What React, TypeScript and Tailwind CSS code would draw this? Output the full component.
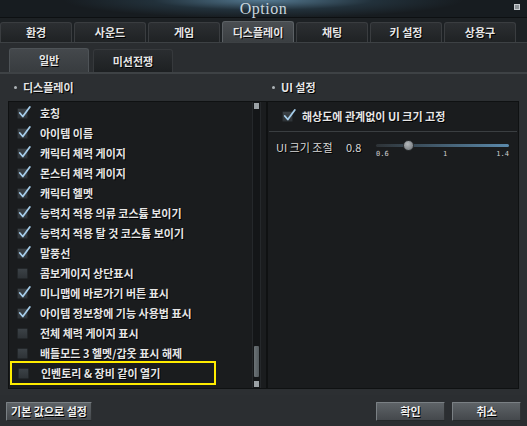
import React from "react";

const items: [string, boolean][] = [
  ["호칭", true],
  ["아이템 이름", true],
  ["캐릭터 체력 게이지", true],
  ["몬스터 체력 게이지", true],
  ["캐릭터 헬멧", true],
  ["능력치 적용 의류 코스튬 보이기", true],
  ["능력치 적용 탈 것 코스튬 보이기", true],
  ["말풍선", true],
  ["콤보게이지 상단표시", false],
  ["미니맵에 바로가기 버튼 표시", true],
  ["아이템 정보창에 기능 사용법 표시", true],
  ["전체 체력 게이지 표시", false],
  ["배틀모드 3 헬멧/갑옷 표시 해제", false],
  ["인벤토리 & 장비 같이 열기", false],
];

const tabs = ["환경", "사운드", "게임", "디스플레이", "채팅", "키 설정", "상용구"];

function Check({ on }: { on: boolean }) {
  return (
    <div className="relative w-[11px] h-[11px] rounded-[1px] bg-[linear-gradient(180deg,#3c4247,#2e3337)] border border-[#23272a] shrink-0">
      {on && (
        <svg className="absolute left-[0px] -top-[3px]" width="13" height="13" viewBox="0 0 13 13">
          <path d="M1.8 7 L4.8 10.5 L11.8 1" stroke="#a6cdea" strokeWidth="1.8" fill="none" strokeLinejoin="round" strokeLinecap="round" />
        </svg>
      )}
    </div>
  );
}

export default function App() {
  const txt = "text-[11px] font-bold text-[#e6e6e6] [text-shadow:1px_1px_0_#000]";
  return (
    <div
      className="w-[527px] h-[426px] bg-[#2b2e31] flex flex-col overflow-hidden"
      style={{ fontFamily: '"Noto Sans CJK KR", "Noto Sans", sans-serif' }}
    >
      {/* Title bar */}
      <div className="relative h-[18px] shrink-0 bg-[radial-gradient(ellipse_200px_18px_at_50%_0%,#557a92,#22313b_55%,#171c20)] border-b border-[#0d1012] flex items-center justify-center">
        <span
          className="text-[16px] leading-none text-[#c9d6de] tracking-[0.5px]"
          style={{ fontFamily: '"Liberation Serif", serif' }}
        >
          Option
        </span>
        <div className="absolute left-[514px] top-[4px] w-[6px] h-[6px] bg-[#8c9296] border border-[#c8ccd0]" />
      </div>

      {/* Tabs */}
      <div className="h-[24px] shrink-0 flex items-end gap-[2px] bg-[#1d2124]">
        {tabs.map((t) => {
          const active = t === "디스플레이";
          return (
            <div
              key={t}
              className={
                "w-[72px] flex items-center justify-center rounded-t-[3px] border border-b-0 " +
                (active
                  ? "h-[21px] bg-[linear-gradient(180deg,#4a4e52,#3a3e41)] border-[#5c6165]"
                  : "h-[20px] bg-[linear-gradient(180deg,#2c2f32,#1f2224)] border-[#3a3d40]")
              }
            >
              <span className={txt}>{t}</span>
            </div>
          );
        })}
      </div>

      {/* Main panel */}
      <div className="h-[353px] shrink-0 bg-[#2c2f32] border-t border-[#3d4144] flex flex-col">
        {/* sub tabs */}
        <div className="h-[29px] shrink-0 flex items-end gap-[4px] pl-[9px] bg-[#2a2d30]">
          <div className="w-[80px] h-[24px] rounded-t-[3px] bg-[linear-gradient(180deg,#44484c,#383c3f)] border border-b-0 border-[#4e5357] flex items-center justify-center">
            <span className={txt}>일반</span>
          </div>
          <div className="w-[80px] h-[23px] rounded-t-[3px] bg-[linear-gradient(180deg,#2a2d30,#1d2022)] border border-b-0 border-[#36393c] flex items-center justify-center">
            <span className={txt}>미션전쟁</span>
          </div>
        </div>
        <div className="h-[2px] shrink-0 bg-[#3e4245]" />

        <div className="flex-1 flex pl-[8px] pr-[8px] pb-[6px] gap-0">
          {/* Left column */}
          <div className="w-[259px] flex flex-col">
            <div className="h-[27px] flex items-center pl-[6px] gap-[6px]">
              <div className="w-[3px] h-[3px] rounded-full bg-[#aeb4b8]" />
              <span className={txt}>디스플레이</span>
            </div>
            <div className="flex-1 bg-[#1a1c1e] border border-[#0f1112] flex">
              <div className="flex-1 flex flex-col pt-[1px]">
                {items.map(([label, on], i) => {
                  const hl = i === items.length - 1;
                  return (
                    <div
                      key={label}
                      className={
                        "h-[20px] flex items-center gap-[12px] " +
                        (hl
                          ? "ml-[1px] w-[206px] h-[24px] -mt-[2px] border-2 border-[#ffec00] pl-[6px]"
                          : "pl-[8px]")
                      }
                    >
                      <Check on={on} />
                      <span className={txt}>{label}</span>
                    </div>
                  );
                })}
              </div>
              {/* scrollbar */}
              <div className="w-[9px] mr-[5px] bg-[#141618] border-x border-[#25282b] flex flex-col items-center py-[1px]">
                <div className="w-[5px] h-[6px] bg-[#9aa0a4]" />
                <div className="flex-1" />
                <div className="w-[5px] h-[31px] rounded-[1px] bg-[linear-gradient(90deg,#6b7276,#535a5e)] mb-[4px]" />
                <div className="w-[5px] h-[6px] bg-[#9aa0a4]" />
              </div>
            </div>
          </div>

          {/* Right column */}
          <div className="flex-1 flex flex-col">
            <div className="h-[27px] flex items-center pl-[5px] gap-[6px]">
              <div className="w-[3px] h-[3px] rounded-full bg-[#aeb4b8]" />
              <span className={txt}>UI 설정</span>
            </div>
            <div className="flex-1 bg-[#1a1c1e] border border-[#0f1112] flex flex-col">
              <div className="h-[30px] flex items-center pl-[13px] gap-[9px] border-b border-[#3a3e41] mx-[1px]">
                <Check on={true} />
                <span className={txt}>해상도에 관계없이 UI 크기 고정</span>
              </div>
              <div className="h-[30px] flex items-center pl-[8px] relative">
                <span className="text-[11px] text-[#d8d8d8] [text-shadow:1px_1px_0_#000] w-[70px]">UI 크기 조절</span>
                <span className="text-[11px] text-[#d8d8d8] [text-shadow:1px_1px_0_#000] w-[30px]">0.8</span>
                <div className="relative w-[133px] h-[30px]">
                  <div className="absolute left-0 right-0 top-[12px] h-[3px] rounded-full bg-[linear-gradient(90deg,#2d3236,#5b8aac)]" />
                  <div className="absolute left-[27px] top-[8px] w-[11px] h-[11px] rounded-full bg-[radial-gradient(circle_at_40%_35%,#b4b8bb,#6b7074)] border border-[#2c2f31]" />
                  <span className="absolute left-0 top-[19px] text-[7px] leading-none text-[#cfcfcf]" style={{ fontFamily: '"DejaVu Sans Mono", monospace' }}>0.6</span>
                  <span className="absolute left-[67px] top-[19px] text-[7px] leading-none text-[#cfcfcf]" style={{ fontFamily: '"DejaVu Sans Mono", monospace' }}>1</span>
                  <span className="absolute right-0 top-[19px] text-[7px] leading-none text-[#cfcfcf]" style={{ fontFamily: '"DejaVu Sans Mono", monospace' }}>1.4</span>
                </div>
              </div>
            </div>
          </div>
        </div>
      </div>

      {/* Bottom bar */}
      <div className="flex-1 flex items-start pt-[7px] px-[6px] bg-[#2b2e31]">
        <Btn w="w-[86px]" label="기본 값으로 설정" />
        <div className="flex-1" />
        <Btn w="w-[69px]" label="확인" />
        <div className="w-[7px]" />
        <Btn w="w-[69px]" label="취소" />
      </div>
    </div>
  );
}

function Btn({ w, label }: { w: string; label: string }) {
  return (
    <div
      className={
        w +
        " h-[19px] flex items-center justify-center bg-[linear-gradient(180deg,#5e6367,#44484c)] border border-[#7a8084] border-b-[#25282a] border-r-[#2f3234] rounded-[1px]"
      }
    >
      <span className="text-[11px] font-bold text-[#f0f0f0] [text-shadow:1px_1px_0_#000]">{label}</span>
    </div>
  );
}
